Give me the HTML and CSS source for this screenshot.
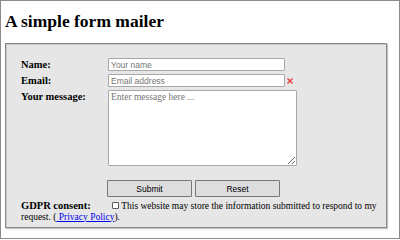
FILE: index.html
```html
<!DOCTYPE html>
<html>
<head>
<meta charset="utf-8">
<link rel="stylesheet" href="styles.css">
</head>
<body>
<div class="page">
  <h1 class="title">A simple form mailer</h1>
  <form class="mailer">
    <div class="row">
      <label class="lbl" for="name">Name:</label>
      <input class="field" id="name" type="text" placeholder="Your name">
    </div>
    <div class="row">
      <label class="lbl" for="email">Email:</label>
      <input class="field" id="email" type="text" placeholder="Email address">
      <svg class="err" width="6" height="6" viewBox="0 0 6 6"><path d="M0.5 0.5 L5.5 5.5 M5.5 0.5 L0.5 5.5" stroke="#e53935" stroke-width="1.3"/></svg>
    </div>
    <div class="row">
      <label class="lbl" for="msg">Your message:</label>
      <textarea class="msg" id="msg" placeholder="Enter message here ..."></textarea>
    </div>
    <div class="buttons">
      <button class="btn" type="button">Submit</button>
      <button class="btn" type="button">Reset</button>
    </div>
    <p class="consent"><span class="lbl consent-lbl">GDPR consent:</span><input class="check" type="checkbox"> This website may store the information submitted to respond to my request. (<a href="#" class="link"> Privacy Policy</a>).</p>
  </form>
</div>
</body>
</html>
```
FILE: styles.css
```css
html, body {
  margin: 0;
  padding: 0;
  background: #fff;
}
.page {
  box-sizing: border-box;
  width: 400px;
  height: 239px;
  border: 1px solid #8c8c8c;
  padding: 0 4px;
  font-family: "Liberation Serif", "Times New Roman", serif;
  color: #000;
}
.title {
  font-size: 17.5px;
  font-weight: bold;
  margin: 10px 0 12px;
  line-height: 20px;
}
.mailer {
  box-sizing: border-box;
  width: 382px;
  height: 185px;
  background: #e6e6e6;
  border: 1px solid #8a8a8a;
  box-shadow: 1px 1px 1px #c4c4c4, inset 1px 1px 0 #c8c8c8;
  padding: 14px 6px 0 15px;
}
.row {
  display: flex;
  align-items: flex-start;
  margin-bottom: 3px;
}
.lbl {
  width: 87px;
  flex: none;
  font-weight: bold;
  font-size: 10.5px;
  line-height: 13px;
}
.field {
  box-sizing: border-box;
  width: 177px;
  height: 13px;
  margin: 0;
  padding: 0 2px;
  border: 1px solid #a8a8a8;
  border-radius: 1px;
  background: #fff;
  font-family: "Liberation Sans", Arial, sans-serif;
  font-size: 8.5px;
}
.field::placeholder {
  color: #767676;
}
.err {
  margin: 4px 0 0 2px;
}
.msg {
  box-sizing: border-box;
  width: 189px;
  height: 76px;
  margin: 0;
  padding: 1px 2px;
  border: 1px solid #a8a8a8;
  border-radius: 1px;
  background: #fff;
  font-family: "Liberation Serif", "Times New Roman", serif;
  font-size: 9.5px;
  resize: both;
}
.msg::placeholder {
  color: #767676;
}
.buttons {
  display: flex;
  gap: 3px;
  margin: 14px 0 0 86px;
}
.btn {
  box-sizing: border-box;
  width: 85px;
  height: 17px;
  margin: 0;
  padding: 0;
  background: #dddddd;
  border: 1px solid #767676;
  border-radius: 1px;
  font-family: "Liberation Sans", Arial, sans-serif;
  font-size: 8.5px;
  color: #000;
}
.consent {
  margin: 4px 0 0;
  font-size: 9.5px;
  line-height: 10.5px;
}
.consent-lbl {
  display: inline-block;
  width: 91px;
  line-height: 10.5px;
}
.check {
  -webkit-appearance: none;
  appearance: none;
  box-sizing: border-box;
  width: 7px;
  height: 7px;
  margin: 0;
  border: 1px solid #5a5a5a;
  border-radius: 1px;
  background: #fff;
  vertical-align: 0;
}
.link {
  color: #0000ee;
  text-decoration: underline;
}
```
